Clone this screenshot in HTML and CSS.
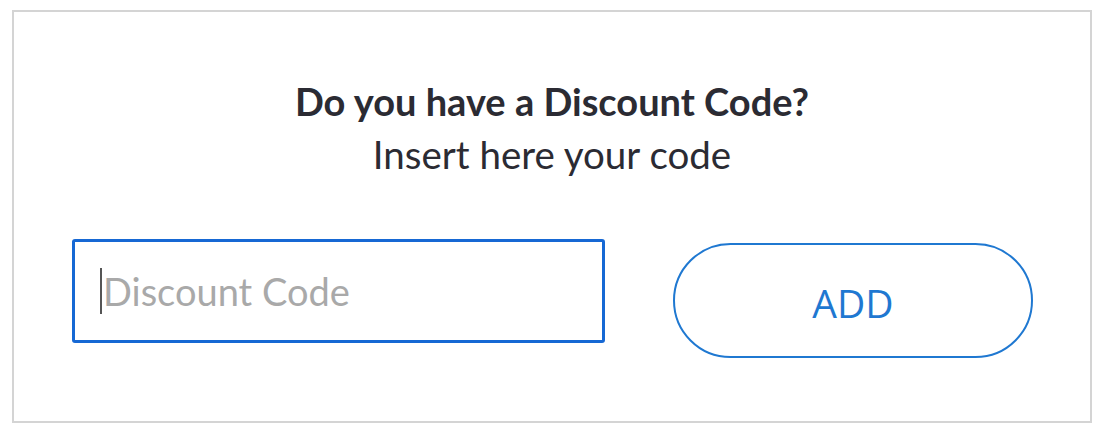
FILE: index.html
```html
<!DOCTYPE html>
<html>
<head>
<meta charset="utf-8">
<link rel="stylesheet" href="styles.css">
</head>
<body>
<div class="card">
  <div class="title">Do you have a Discount Code?</div>
  <div class="subtitle">Insert here your code</div>
  <div class="row">
    <div class="input"><span class="caret"></span><span class="placeholder">Discount Code</span></div>
    <button class="add">ADD</button>
  </div>
</div>
</body>
</html>
```

FILE: styles.css
```css
html, body {
  margin: 0;
  padding: 0;
  background: #fff;
}
body {
  padding: 10px 0 0 12px;
}
.card {
  box-sizing: border-box;
  width: 1080px;
  height: 413px;
  border: 2px solid #d4d4d4;
  font-family: Lato, "Liberation Sans", sans-serif;
  color: #2b2b33;
  padding-top: 66px;
  text-align: center;
}
.title {
  font-weight: 700;
  font-size: 38px;
  line-height: 46px;
}
.subtitle {
  font-size: 38.5px;
  line-height: 46px;
  margin-top: 7px;
}
.row {
  display: flex;
  align-items: flex-start;
  margin-top: 62px;
  padding-left: 58px;
}
.input {
  box-sizing: border-box;
  width: 533px;
  height: 104px;
  border: 3px solid #1668d4;
  border-radius: 3px;
  display: flex;
  align-items: center;
  padding-left: 25px;
  text-align: left;
}
.caret {
  width: 2px;
  height: 46px;
  background: #555;
  margin-right: 1px;
}
.placeholder {
  font-size: 38px;
  color: #a9a9a9;
}
.add {
  box-sizing: border-box;
  margin-left: 68px;
  margin-top: 4px;
  width: 360px;
  height: 115px;
  border: 2px solid #1f78d1;
  border-radius: 58px;
  background: #fff;
  color: #1f78d1;
  font-family: "Open Sans", "Liberation Sans", sans-serif;
  font-size: 39px;
  padding: 4px 0 0 0;
}
```
